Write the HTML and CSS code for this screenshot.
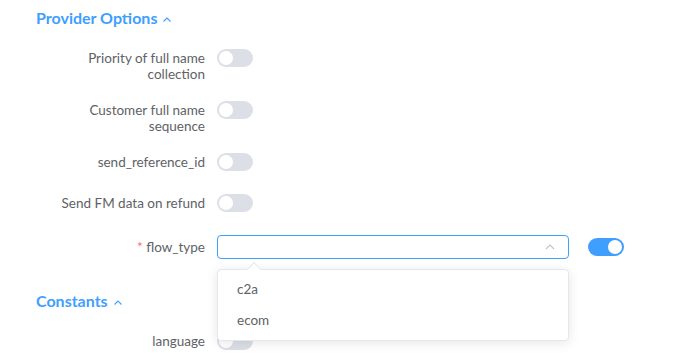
FILE: index.html
```html
<!DOCTYPE html>
<html lang="en">
<head>
    <meta charset="UTF-8">
    <title>Provider Options</title>
    <link rel="stylesheet" href="styles.css">
</head>
<body>
    <div class="settings">
        <section class="section">
            <h2 class="section-title">Provider Options
                <svg class="chevron" width="10" height="10" viewBox="0 0 10 10"><path d="M1.5 6.5L5 3l3.5 3.5" fill="none" stroke="currentColor" stroke-width="1.1"/></svg>
            </h2>

            <div class="form-item">
                <label class="form-label">Priority of full name collection</label>
                <div class="form-content"><span class="switch"></span></div>
            </div>
            <div class="form-item">
                <label class="form-label">Customer full name sequence</label>
                <div class="form-content"><span class="switch"></span></div>
            </div>
            <div class="form-item">
                <label class="form-label">send_reference_id</label>
                <div class="form-content"><span class="switch"></span></div>
            </div>
            <div class="form-item">
                <label class="form-label">Send FM data on refund</label>
                <div class="form-content"><span class="switch"></span></div>
            </div>
            <div class="form-item form-item-select">
                <label class="form-label"><span class="required">*</span> flow_type</label>
                <div class="form-content">
                    <div class="select">
                        <div class="select-input">
                            <svg class="select-arrow" width="12" height="12" viewBox="0 0 12 12"><path d="M2 8l4-4 4 4" fill="none" stroke="currentColor" stroke-width="1.1"/></svg>
                        </div>
                        <div class="dropdown">
                            <span class="dropdown-arrow"></span>
                            <ul class="dropdown-list">
                                <li>c2a</li>
                                <li>ecom</li>
                            </ul>
                        </div>
                    </div>
                    <span class="switch is-on"></span>
                </div>
            </div>
        </section>

        <section class="section">
            <h2 class="section-title">Constants
                <svg class="chevron" width="10" height="10" viewBox="0 0 10 10"><path d="M1.5 6.5L5 3l3.5 3.5" fill="none" stroke="currentColor" stroke-width="1.1"/></svg>
            </h2>
            <div class="form-item">
                <label class="form-label">language</label>
                <div class="form-content"><span class="switch"></span></div>
            </div>
        </section>
    </div>
</body>
</html>
```

FILE: styles.css
```css
:root {
    --primary-color: #409eff;
    --text-color: #606266;
    --switch-off: #dcdfe6;
    --border-color: #e4e7ed;
}

* {
    margin: 0;
    padding: 0;
    box-sizing: border-box;
}

body {
    font-family: 'Lato', 'Noto Sans', sans-serif;
    background: #ffffff;
    color: var(--text-color);
    font-size: 13.5px;
    height: 353px;
    overflow: hidden;
}

/* last item's margin collapses into this one */
.section + .section {
    margin-top: 24px;
}

.section-title {
    height: 36px;
    line-height: 36px;
    padding-left: 36px;
    margin-bottom: 13px;
    font-size: 16px;
    font-weight: 700;
    color: var(--primary-color);
    display: flex;
    align-items: center;
    gap: 5px;
}

.chevron {
    margin-top: 3px;
}

.form-item {
    display: flex;
    align-items: flex-start;
    margin-bottom: 19px;
}

.form-label {
    width: 217px;
    flex-shrink: 0;
    padding: 1px 12px 0 50px;
    text-align: right;
    line-height: 16px;
    color: var(--text-color);
}

.form-content {
    min-height: 22px;
    display: flex;
    align-items: flex-start;
}

.switch {
    display: inline-block;
    position: relative;
    width: 36px;
    height: 18px;
    border-radius: 9px;
    background: var(--switch-off);
}

.switch::after {
    content: '';
    position: absolute;
    top: 2px;
    left: 2px;
    width: 14px;
    height: 14px;
    border-radius: 50%;
    background: #ffffff;
}

.switch.is-on {
    background: var(--primary-color);
}

.switch.is-on::after {
    left: 20px;
}

.form-item-select .form-label {
    padding-top: 4px;
}

.form-item-select .form-content {
    align-items: center;
    gap: 19px;
}

.select {
    position: relative;
    width: 352px;
}

.select-input {
    height: 24px;
    border: 1px solid var(--primary-color);
    border-radius: 4px;
    display: flex;
    align-items: center;
    justify-content: flex-end;
    padding-right: 12px;
    color: #c0c4cc;
}

.dropdown {
    position: absolute;
    top: 34px;
    left: 0;
    width: 352px;
    background: #ffffff;
    border: 1px solid var(--border-color);
    border-radius: 4px;
    box-shadow: 0 2px 12px rgba(0, 0, 0, 0.1);
    z-index: 10;
}

.dropdown-arrow {
    position: absolute;
    top: -6px;
    left: 31px;
    width: 10px;
    height: 10px;
    background: #ffffff;
    border-top: 1px solid var(--border-color);
    border-left: 1px solid var(--border-color);
    transform: rotate(45deg);
}

.dropdown-list {
    list-style: none;
    padding: 4px 0;
}

.dropdown-list li {
    line-height: 31px;
    padding: 0 19px;
    font-size: 13.5px;
    color: var(--text-color);
}

.required {
    color: #f56c6c;
}
```
